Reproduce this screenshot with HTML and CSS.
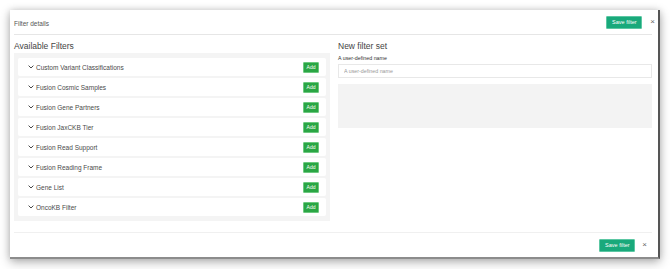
FILE: index.html
```html
<!DOCTYPE html>
<html>
<head>
<meta charset="utf-8">
<link rel="stylesheet" href="styles.css">
</head>
<body>
<div class="stage">
  <div class="modal">
    <div class="modal-header">
      <span class="modal-title">Filter details</span>
      <div class="header-actions">
        <button class="btn-save">Save filter</button>
        <span class="close">×</span>
      </div>
    </div>
    <div class="modal-body">
      <div class="col">
        <h2 class="col-title">Available Filters</h2>
        <div class="filter-list">
          <div class="filter-row"><span class="chev"><svg width="6" height="4" viewBox="0 0 6 4"><path d="M0.6 0.6 L3 3 L5.4 0.6" fill="none" stroke="#333" stroke-width="0.9"/></svg></span><span class="filter-name">Custom Variant Classifications</span><button class="btn-add">Add</button></div>
          <div class="filter-row"><span class="chev"><svg width="6" height="4" viewBox="0 0 6 4"><path d="M0.6 0.6 L3 3 L5.4 0.6" fill="none" stroke="#333" stroke-width="0.9"/></svg></span><span class="filter-name">Fusion Cosmic Samples</span><button class="btn-add">Add</button></div>
          <div class="filter-row"><span class="chev"><svg width="6" height="4" viewBox="0 0 6 4"><path d="M0.6 0.6 L3 3 L5.4 0.6" fill="none" stroke="#333" stroke-width="0.9"/></svg></span><span class="filter-name">Fusion Gene Partners</span><button class="btn-add">Add</button></div>
          <div class="filter-row"><span class="chev"><svg width="6" height="4" viewBox="0 0 6 4"><path d="M0.6 0.6 L3 3 L5.4 0.6" fill="none" stroke="#333" stroke-width="0.9"/></svg></span><span class="filter-name">Fusion JaxCKB Tier</span><button class="btn-add">Add</button></div>
          <div class="filter-row"><span class="chev"><svg width="6" height="4" viewBox="0 0 6 4"><path d="M0.6 0.6 L3 3 L5.4 0.6" fill="none" stroke="#333" stroke-width="0.9"/></svg></span><span class="filter-name">Fusion Read Support</span><button class="btn-add">Add</button></div>
          <div class="filter-row"><span class="chev"><svg width="6" height="4" viewBox="0 0 6 4"><path d="M0.6 0.6 L3 3 L5.4 0.6" fill="none" stroke="#333" stroke-width="0.9"/></svg></span><span class="filter-name">Fusion Reading Frame</span><button class="btn-add">Add</button></div>
          <div class="filter-row"><span class="chev"><svg width="6" height="4" viewBox="0 0 6 4"><path d="M0.6 0.6 L3 3 L5.4 0.6" fill="none" stroke="#333" stroke-width="0.9"/></svg></span><span class="filter-name">Gene List</span><button class="btn-add">Add</button></div>
          <div class="filter-row"><span class="chev"><svg width="6" height="4" viewBox="0 0 6 4"><path d="M0.6 0.6 L3 3 L5.4 0.6" fill="none" stroke="#333" stroke-width="0.9"/></svg></span><span class="filter-name">OncoKB Filter</span><button class="btn-add">Add</button></div>
        </div>
      </div>
      <div class="col">
        <h2 class="col-title">New filter set</h2>
        <label class="field-label">A user-defined name</label>
        <input class="field-input" type="text" placeholder="A user-defined name">
        <div class="drop-area"></div>
      </div>
    </div>
    <div class="modal-footer">
      <button class="btn-save">Save filter</button>
      <span class="close">×</span>
    </div>
  </div>
</div>
</body>
</html>
```

FILE: styles.css
```css
* { box-sizing: border-box; }
html, body { margin: 0; padding: 0; background: #fff; }
body {
  font-family: "Liberation Sans", Arial, sans-serif;
  color: #333;
  width: 670px;
  height: 269px;
  overflow: hidden;
}
.stage {
  padding: 10px 0 0 10px;
}
.modal {
  width: 650px;
  height: 249px;
  background: #fff;
  border-right: 2px solid #555;
  border-bottom: 2px solid #8c8c8c;
  box-shadow: 0 3px 10px rgba(0,0,0,0.3), 0 0 6px rgba(0,0,0,0.12);
  padding: 0 4px 0 4px;
  display: flex;
  flex-direction: column;
}
.modal-header {
  height: 25px;
  border-bottom: 1px solid #e6e6e6;
  display: flex;
  align-items: center;
  justify-content: space-between;
  margin-right: 2px;
}
.modal-title {
  font-size: 6.5px;
  color: #555;
  padding-top: 3px;
}
.header-actions {
  display: flex;
  align-items: center;
  gap: 8px;
  margin-right: -3px;
}
.btn-save {
  font-family: inherit;
  font-size: 5.5px;
  color: #fff;
  background: #19a97b;
  border: 1px solid #5cc7a3;
  height: 13px;
  width: 36px;
  padding: 0;
  border-radius: 1px;
}
.close {
  font-size: 8px;
  color: #666;
  line-height: 1;
}
.modal-body {
  display: flex;
  gap: 8px;
  padding-top: 5px;
  height: 198px;
  border-bottom: 1px solid #f0f0f0;
  margin-right: 2px;
}
.col {
  flex: 1;
  display: flex;
  flex-direction: column;
}
.col-title {
  margin: 0;
  font-weight: normal;
  font-size: 8.5px;
  color: #444;
  height: 13px;
  line-height: 12px;
}
.filter-list {
  background: #f4f4f4;
  padding: 5px 4px;
  display: flex;
  flex-direction: column;
  gap: 2px;
  width: 316px;
}
.filter-row {
  background: #fff;
  height: 18px;
  display: flex;
  align-items: center;
  padding: 0 7px 0 10px;
  border-radius: 2px;
}
.chev {
  width: 6px;
  height: 4px;
  display: flex;
  margin-right: 2px;
}
.chev svg { display: block; }
.filter-name {
  flex: 1;
  font-size: 6.5px;
  color: #4a4a4a;
}
.btn-add {
  font-family: inherit;
  font-size: 5px;
  color: #fff;
  background: #2aa644;
  border: 1px solid #6cc87f;
  width: 16px;
  height: 11px;
  padding: 0;
  border-radius: 1px;
}
.field-label {
  font-size: 5.3px;
  color: #333;
  height: 9px;
  line-height: 9px;
  margin-top: 1px;
}
.field-input {
  font-family: inherit;
  font-size: 5.3px;
  height: 14px;
  border: 1px solid #e8e8e8;
  padding: 0 5px;
  margin-top: 1px;
  outline: none;
}
.field-input::placeholder { color: #999; }
.drop-area {
  margin-top: 6px;
  height: 44px;
  background: #f3f3f3;
}
.modal-footer {
  flex: 1;
  display: flex;
  align-items: center;
  justify-content: flex-end;
  gap: 7px;
  padding-right: 7px;
}
```
